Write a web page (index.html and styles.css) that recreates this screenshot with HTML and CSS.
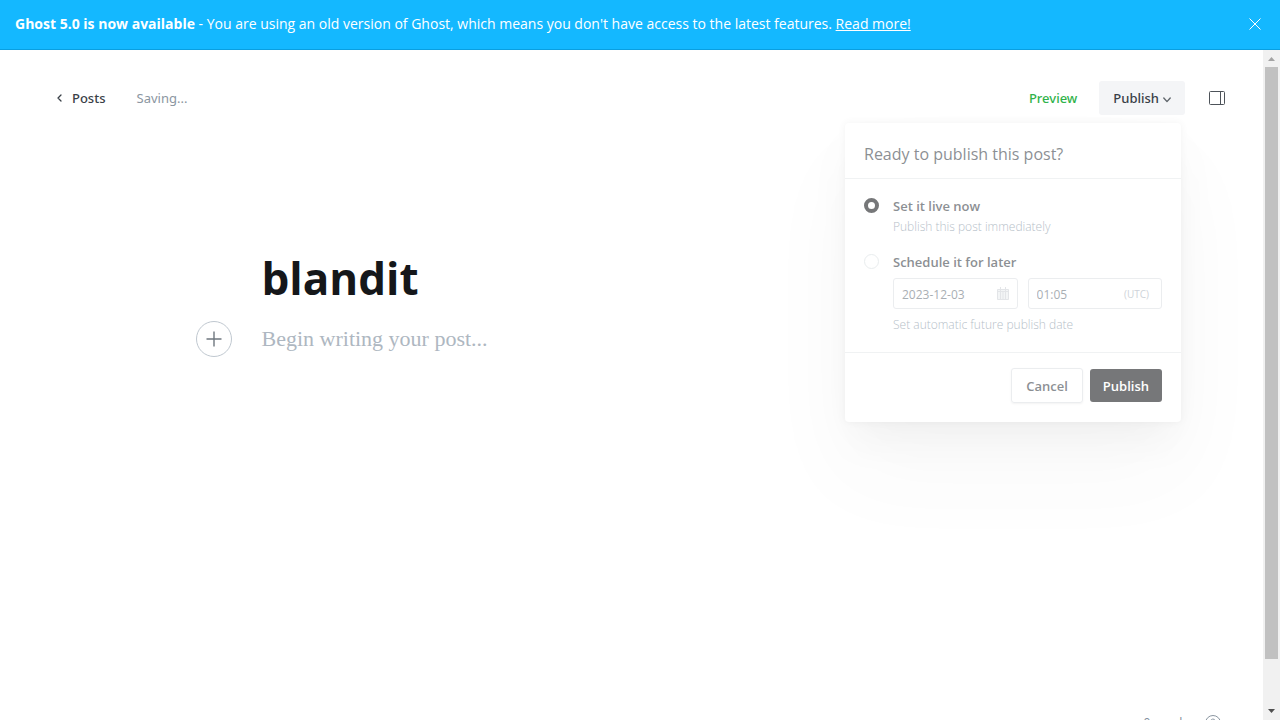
FILE: index.html
```html
<!DOCTYPE html>
<html lang="en">
<head>
<meta charset="utf-8">
<meta name="viewport" content="width=device-width, initial-scale=1">
<title>blandit - Ghost</title>
<link rel="stylesheet" href="styles.css">
</head>
<body>
<div class="app">
  <aside class="banner">
    <p class="banner-text"><strong>Ghost 5.0 is now available</strong> - You are using an old version of Ghost, which means you don't have access to the latest features. <a href="#">Read more!</a></p>
    <button class="icon-button" type="button" aria-label="Close">
      <svg width="12" height="12" viewBox="0 0 12 12" fill="none" stroke="#fff" stroke-width="1"><path d="M.5.5l11 11M11.5.5l-11 11"/></svg>
    </button>
  </aside>
  <div class="viewport">
    <main class="editor">
      <header class="toolbar">
        <a class="back" href="#">
          <svg width="5" height="8" viewBox="0 0 5 8" fill="none" stroke="#394047" stroke-width="1.3" stroke-linecap="round" stroke-linejoin="round"><path d="M4 1L1 4l3 3"/></svg>
          Posts
        </a>
        <span class="status">Saving...</span>
        <button class="preview" type="button">Preview</button>
        <div class="publish-menu">
          <button class="publish-trigger" type="button">Publish
            <svg width="8" height="6" viewBox="0 0 8 6" fill="none" stroke="#62686e" stroke-width="1.4" stroke-linecap="round" stroke-linejoin="round"><path d="M.8 1L4 4.6 7.2 1"/></svg>
          </button>
          <form class="panel">
            <h2 class="panel-title">Ready to publish this post?</h2>
            <div class="panel-body">
              <div class="option">
                <input class="radio" type="radio" name="when" id="now" checked>
                <div class="option-text">
                  <label class="option-label" for="now">Set it live now</label>
                  <p class="option-note">Publish this post immediately</p>
                </div>
              </div>
              <div class="option">
                <input class="radio" type="radio" name="when" id="later">
                <div class="option-text">
                  <label class="option-label" for="later">Schedule it for later</label>
                  <div class="fields">
                    <div class="field">
                      <input type="text" value="2023-12-03" aria-label="Date">
                      <svg width="12" height="13" viewBox="0 0 12 13" fill="none" stroke="#cfd4d8" stroke-width="1"><path fill="#eceef0" d="M.5 2.500h11v10H.5z"/><path d="M.5 4.500h11M3.500 0v4M8.500 0v4M3.500 5v7M6 5v7M8.500 5v7"/></svg>
                    </div>
                    <div class="field">
                      <input type="text" value="01:05" aria-label="Time">
                      <span class="zone">(UTC)</span>
                    </div>
                  </div>
                  <p class="option-note">Set automatic future publish date</p>
                </div>
              </div>
            </div>
            <footer class="panel-footer">
              <button class="cancel" type="button">Cancel</button>
              <button class="confirm" type="button">Publish</button>
            </footer>
          </form>
        </div>
        <button class="icon-button" type="button" aria-label="Settings">
          <svg width="16" height="14" viewBox="0 0 16 14" fill="none" stroke="#4d5359" stroke-width="1"><rect x=".5" y=".5" width="15" height="13" rx="1"/><path d="M11.500 1v12"/></svg>
        </button>
      </header>
      <article class="post">
        <h1 class="post-title">blandit</h1>
        <button class="add" type="button" aria-label="Add a card">
          <svg width="16" height="16" viewBox="0 0 16 16" fill="none" stroke="#6f777f" stroke-width="1.4"><path d="M8 .5v15M.5 8h15"/></svg>
        </button>
        <p class="post-placeholder">Begin writing your post...</p>
      </article>
      <footer class="word-count">
        <span>0 words</span>
        <svg width="16" height="16" viewBox="0 0 16 16" fill="none" stroke="#8b96a1" stroke-width="1"><circle cx="8" cy="8" r="7.5"/><path d="M5.800 6.200a2.200 2.200 0 1 1 3.200 2c-.7.4-1 .7-1 1.500M8 11v1"/></svg>
      </footer>
    </main>
    <div class="scrollbar" aria-hidden="true">
      <svg width="17" height="17" viewBox="0 0 17 17" fill="#a3a3a3"><path d="M5 11h7L8.500 7z"/></svg>
      <div class="thumb"></div>
      <svg width="17" height="17" viewBox="0 0 17 17" fill="#505050"><path d="M5 6h7L8.500 10z"/></svg>
    </div>
  </div>
</div>
</body>
</html>
```

FILE: styles.css
```css
* { box-sizing: border-box; }
body {
  margin: 0;
  font: 14px/20px "Open Sans", "Noto Sans", sans-serif;
  color: #394047;
  background: #fff;
}
h1, h2, p { margin: 0; }
button, input { font: inherit; color: inherit; margin: 0; }
button { border: 0; padding: 0; background: none; }
a { color: inherit; }
svg { display: block; flex: none; }

.app { display: flex; flex-direction: column; height: 100vh; overflow: hidden; }
.banner {
  display: flex;
  align-items: center;
  justify-content: space-between;
  flex: none;
  padding: 14px 19px 15px 15px;
  background: #14b8ff;
  border-bottom: 1px solid #0a9fe0;
  color: #fff;
}
.icon-button { display: flex; }
.viewport { display: flex; flex: 1; min-height: 0; }
.editor { display: flex; flex-direction: column; flex: 1; min-width: 0; }

.toolbar {
  display: flex;
  align-items: center;
  padding: 31px 38px 0 57px;
  font-family: "Noto Sans", sans-serif;
  font-size: 13px;
}
.back {
  display: flex;
  align-items: center;
  gap: 10px;
  margin-right: 31px;
  font-weight: 500;
  text-decoration: none;
}
.status { margin-right: auto; color: #8b96a1; }
.preview { margin-right: 22px; color: #30b24a; font-weight: 500; }
.publish-menu { position: relative; margin-right: 24px; }
.publish-trigger {
  display: flex;
  align-items: center;
  gap: 4px;
  height: 34px;
  padding: 0 14px;
  border-radius: 3px;
  background: #f4f5f7;
  font-weight: 500;
}
.publish-trigger svg { margin-top: 4px; }

.panel {
  position: absolute;
  top: 42px;
  right: 4px;
  width: 336px;
  background: #fff;
  border-radius: 4px;
  font-family: "Open Sans", sans-serif;
  opacity: 0.58;
  box-shadow: 0 0 7px rgba(0, 0, 0, 0.08), 0 22px 40px -8px rgba(0, 0, 0, 0.08), 0 50px 90px rgba(0, 0, 0, 0.04);
}
.panel-title {
  padding: 20px 19px 13px;
  border-bottom: 1px solid #e6e9eb;
  font-size: 16px;
  font-weight: 400;
  line-height: 22px;
}
.panel-body {
  display: flex;
  flex-direction: column;
  gap: 16px;
  padding: 18px 19px 17px;
  border-bottom: 1px solid #e6e9eb;
}
.option { display: flex; gap: 14px; }
.radio {
  appearance: none;
  flex: none;
  width: 15px;
  height: 15px;
  margin: 1px 0 0;
  border: 1px solid #dae1e3;
  border-radius: 50%;
}
.radio:checked { border: 4px solid #15171a; }
.option-text { flex: 1; min-width: 0; }
.option-label { display: block; margin-bottom: 2px; font-weight: 600; line-height: 18px; }
.option-note { color: #8090a0; font-size: 12px; font-weight: 300; }
.fields { display: flex; gap: 10px; margin: 7px 0 6px; }
.field {
  display: flex;
  align-items: center;
  flex: 126;
  min-width: 0;
  height: 31px;
  padding: 0 8px;
  border: 1px solid #dde1e5;
  border-radius: 3px;
}
.field + .field { flex: 133; padding-right: 12px; }
.field input {
  flex: 1;
  min-width: 0;
  padding: 2px 0 0;
  border: 0;
  background: none;
  color: #6b747d;
  font-size: 12px;
  outline: 0;
}
.zone { color: #abb4be; font-size: 10px; }
.panel-footer {
  display: flex;
  align-items: center;
  justify-content: flex-end;
  gap: 7px;
  padding: 15px 19px 19px;
  font-weight: 600;
}
.cancel, .confirm { height: 33px; padding: 0 13px; border-radius: 3px; }
.cancel {
  height: 35px;
  padding: 0 14px;
  border: 1px solid #dde1e5;
  box-shadow: 0 1px 2px rgba(0, 0, 0, 0.08);
}
.confirm { background: #15171a; color: #fff; }

.post {
  display: grid;
  grid-template-columns: 1fr minmax(0, 740px) 1fr;
  align-items: center;
  row-gap: 10px;
  padding-top: 130px;
}
.post-title {
  grid-column: 2;
  color: #15171a;
  font-size: 44px;
  font-weight: 700;
  line-height: 66px;
}
.add {
  display: flex;
  align-items: center;
  justify-content: center;
  grid-column: 1;
  justify-self: end;
  width: 36px;
  height: 36px;
  margin-right: 30px;
  border: 1px solid #c0c8d0;
  border-radius: 50%;
}
.post-placeholder {
  color: #aeb7c1;
  font: 22px/32px Georgia, "Liberation Serif", serif;
}
.word-count {
  display: flex;
  gap: 17px;
  justify-content: flex-end;
  margin: auto 42px -11px 0;
  color: #7c8b9a;
  font-size: 12px;
  line-height: 16px;
}

.scrollbar { display: flex; flex-direction: column; flex: none; background: #f1f1f1; }
.thumb { flex: 592; margin: 0 2px; background: #c1c1c1; }
.scrollbar svg:last-child { margin-top: 44px; }
```
